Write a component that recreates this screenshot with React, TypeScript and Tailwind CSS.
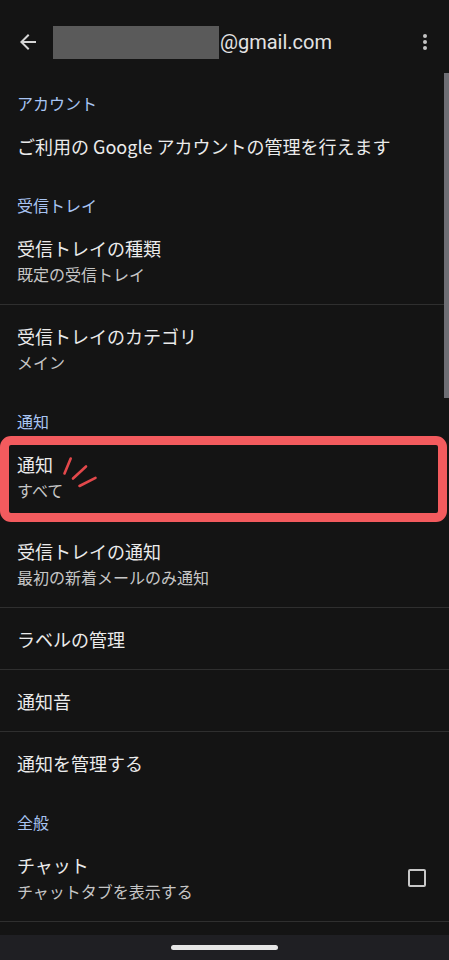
import React from "react";

const font = { fontFamily: '"Noto Sans CJK JP", "Noto Sans", sans-serif' };

function SectionLabel({ text }: { text: string }) {
  return (
    <div className="px-[17px] pt-[17px] text-[16px] leading-[24px] text-[#a8c4f2]">{text}</div>
  );
}

function Item({
  title,
  sub,
  divider,
  right,
}: {
  title: string;
  sub?: string;
  divider?: boolean;
  right?: React.ReactNode;
}) {
  return (
    <div className={divider ? "border-b border-[#2f2f2f]" : ""}>
      <div className="flex items-center px-[17px] pt-[18px] pb-[17px]">
        <div className="flex-1">
          <div className="text-[18px] leading-[26px] font-normal text-[#ebebeb]">{title}</div>
          {sub && <div className="text-[16px] leading-[26px] text-[#c6c6c6]">{sub}</div>}
        </div>
        {right}
      </div>
    </div>
  );
}

export default function App() {
  return (
    <div className="relative flex h-[960px] w-[449px] flex-col overflow-hidden bg-[#141414]" style={font}>
      {/* Top bar */}
      <div className="flex h-[74px] items-center pt-[10px]">
        <div className="flex w-[53px] items-center justify-center">
          <svg width="24" height="24" viewBox="0 0 24 24" className="ml-[3px]">
            <path d="M20 11H7.83l5.59-5.59L12 4l-8 8 8 8 1.41-1.41L7.83 13H20v-2z" fill="#d6d6d6" />
          </svg>
        </div>
        <div className="h-[33px] w-[166px] bg-[#5a5a5a]" />
        <div
          className="ml-[1px] text-[20px] leading-[24px] text-[#e3e3e3]"
          style={{ fontFamily: 'Roboto, "Noto Sans", sans-serif' }}
        >
          @gmail.com
        </div>
        <div className="ml-auto mr-[22px] flex flex-col items-center gap-[2px]">
          <span className="h-[4px] w-[4px] rounded-full bg-[#c4c4c4]" />
          <span className="h-[4px] w-[4px] rounded-full bg-[#c4c4c4]" />
          <span className="h-[4px] w-[4px] rounded-full bg-[#c4c4c4]" />
        </div>
      </div>

      <SectionLabel text="アカウント" />
      <Item title="ご利用の Google アカウントの管理を行えます" />

      <SectionLabel text="受信トレイ" />
      <Item title="受信トレイの種類" sub="既定の受信トレイ" divider />
      <Item title="受信トレイのカテゴリ" sub="メイン" />

      <SectionLabel text="通知" />
      <div className="relative">
        <Item title="通知" sub="すべて" />
        <div className="pointer-events-none absolute bottom-[-2px] left-0 right-[2px] top-[3px] rounded-[11px] border-[9px] border-[#f35b5e]" />
        <svg className="absolute left-0 top-0" width="120" height="86" viewBox="0 0 120 86">
          <g stroke="#e3484b" strokeWidth="2.6" strokeLinecap="round">
            <line x1="70.7" y1="25.5" x2="64.5" y2="40.5" />
            <line x1="86" y1="33.5" x2="73" y2="45.5" />
            <line x1="95.5" y1="44.8" x2="79.5" y2="53" />
          </g>
        </svg>
      </div>
      <Item title="受信トレイの通知" sub="最初の新着メールのみ通知" divider />
      <Item title="ラベルの管理" divider />
      <Item title="通知音" divider />
      <Item title="通知を管理する" />

      <SectionLabel text="全般" />
      <Item
        title="チャット"
        sub="チャットタブを表示する"
        divider
        right={<div className="mr-[6px] h-[18px] w-[18px] rounded-[2px] border-2 border-[#c8c8c8]" />}
      />

      {/* Scrollbar */}
      <div className="absolute right-0 top-[73px] h-[325px] w-[5px] bg-[#6e6e74]" />

      {/* Nav bar */}
      <div className="mt-auto flex h-[25px] items-start justify-center bg-[#1f1f23]">
        <div className="mt-[10px] h-[5px] w-[107px] rounded-full bg-[#e6e6e6]" />
      </div>
    </div>
  );
}
